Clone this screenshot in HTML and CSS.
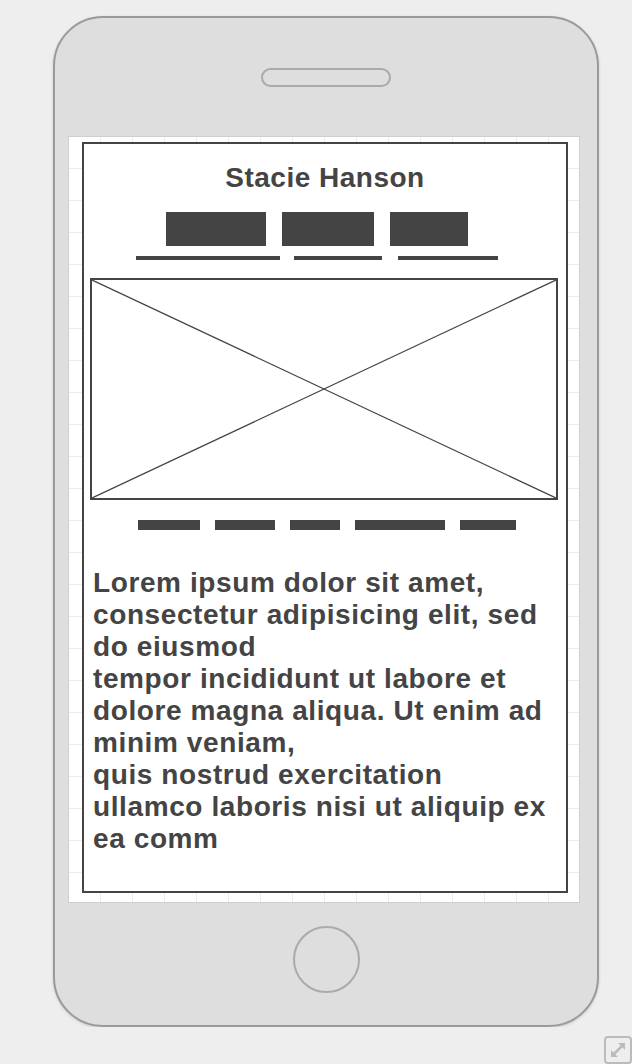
FILE: index.html
```html
<!DOCTYPE html>
<html lang="en">

<head>
    <meta charset="UTF-8">
    <meta name="viewport" content="width=device-width, initial-scale=1.0">
    <title>Profile - Mockup</title>
    <link rel="stylesheet" href="styles.css">
</head>

<body>
    <div class="phone">
        <div class="speaker"></div>

        <div class="screen">
            <div class="profile">
                <h1 class="name">Stacie Hanson</h1>

                <div class="tabs">
                    <div class="tab-blocks">
                        <span class="block" style="width: 100px"></span>
                        <span class="block" style="width: 92px"></span>
                        <span class="block" style="width: 78px"></span>
                    </div>
                    <div class="tab-lines">
                        <span class="line" style="width: 144px"></span>
                        <span class="line" style="width: 88px"></span>
                        <span class="line last" style="width: 100px"></span>
                    </div>
                </div>

                <!-- image placeholder -->
                <div class="picture">
                    <svg viewBox="0 0 100 100" preserveAspectRatio="none">
                        <line x1="0" y1="0" x2="100" y2="100" vector-effect="non-scaling-stroke" />
                        <line x1="100" y1="0" x2="0" y2="100" vector-effect="non-scaling-stroke" />
                    </svg>
                </div>

                <div class="links">
                    <span class="bar" style="width: 62px"></span>
                    <span class="bar" style="width: 60px"></span>
                    <span class="bar" style="width: 50px"></span>
                    <span class="bar" style="width: 90px"></span>
                    <span class="bar" style="width: 56px"></span>
                </div>

                <p class="bio">
                    Lorem ipsum dolor sit amet, consectetur adipisicing elit, sed do eiusmod<br>
                    tempor incididunt ut labore et dolore magna aliqua. Ut enim ad minim veniam,<br>
                    quis nostrud exercitation ullamco laboris nisi ut aliquip ex ea comm
                </p>
            </div>
        </div>

        <div class="home-button"></div>
    </div>

    <div class="expand" title="Expand">
        <svg width="28" height="28" viewBox="0 0 28 28">
            <rect x="1" y="1" width="26" height="26" rx="3" fill="none" stroke="#bbb" stroke-width="2" />
            <path d="M8 20 L20 8" stroke="#bbb" stroke-width="2.5" />
            <path d="M14 7 H21 V14 Z" fill="#bbb" />
            <path d="M7 14 V21 H14 Z" fill="#bbb" />
        </svg>
    </div>
</body>

</html>
```

FILE: styles.css
```css
body {
    margin: 0;
    background-color: #eeeeee;
    font-family: "Liberation Sans", Arial, sans-serif;
    color: #444444;
}

.phone {
    box-sizing: border-box;
    width: 546px;
    height: 1011px;
    margin: 16px 0 0 53px;
    border: 2px solid #9a9a9a;
    border-radius: 50px;
    background-color: #dedede;
    box-shadow: 0 1px 3px rgba(0, 0, 0, 0.15);
    display: flex;
    flex-direction: column;
    align-items: center;
}

.speaker {
    box-sizing: border-box;
    width: 130px;
    height: 19px;
    margin-top: 50px;
    border: 2px solid #aaaaaa;
    border-radius: 10px;
}

.screen {
    box-sizing: border-box;
    width: 512px;
    height: 767px;
    margin: 49px 4px 0 0;
    padding: 5px 11px 9px 13px;
    border: 1px solid #cfcfcf;
    background-color: #ffffff;
    background-image:
        linear-gradient(to right, transparent 31px, #ececec 31px),
        linear-gradient(to bottom, transparent 31px, #ececec 31px);
    background-size: 32px 32px;
    display: flex;
}

.profile {
    flex: 1;
    border: 2px solid #444444;
    background-color: #ffffff;
    display: flex;
    flex-direction: column;
}

.name {
    margin: 19px 0 0;
    font-size: 28px;
    line-height: 30px;
    letter-spacing: 0.5px;
    text-align: center;
}

.tabs {
    margin-top: 19px;
    padding-right: 16px;
    display: flex;
    flex-direction: column;
    gap: 10px;
}

.tab-blocks,
.tab-lines {
    display: flex;
    justify-content: center;
}

.tab-blocks {
    gap: 16px;
}

.tab-lines {
    gap: 14px;
}

.block {
    height: 34px;
    background-color: #444444;
}

.line {
    height: 4px;
    background-color: #444444;
}

.line.last {
    margin-left: 2px;
}

.picture {
    box-sizing: border-box;
    width: 468px;
    height: 222px;
    margin: 18px 0 0 6px;
    border: 2px solid #444444;
}

.picture svg {
    display: block;
    width: 100%;
    height: 100%;
    stroke: #444444;
    stroke-width: 1.3;
}

.links {
    margin-top: 20px;
    padding-left: 4px;
    display: flex;
    justify-content: center;
    gap: 15px;
}

.bar {
    height: 10px;
    background-color: #444444;
}

.bio {
    margin: 37px 0 0;
    padding: 0 6px 0 9px;
    font-size: 28px;
    font-weight: bold;
    line-height: 32px;
    letter-spacing: 0.6px;
}

.home-button {
    box-sizing: border-box;
    width: 67px;
    height: 67px;
    margin-top: 23px;
    border: 2px solid #aaaaaa;
    border-radius: 50%;
}

.expand {
    position: fixed;
    right: 0;
    bottom: 0;
    width: 28px;
    height: 28px;
}

.expand svg {
    display: block;
}
```
